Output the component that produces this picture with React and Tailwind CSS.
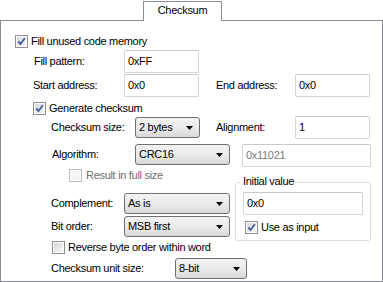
import React from "react";

function Check({ checked, disabled }) {
  return (
    <div
      className={
        disabled
          ? "w-[13px] h-[13px] shrink-0 border border-[#bcbcbc] bg-white p-[1px]"
          : "w-[13px] h-[13px] shrink-0 border border-[#8f8f8f] bg-white p-[1px]"
      }
    >
      <div
        className={
          disabled
            ? "w-full h-full bg-[#f4f4f4]"
            : "w-full h-full bg-linear-to-br from-[#d3d6dc] to-[#f8f8f8]"
        }
      >
        {checked && (
          <svg width="9" height="9" viewBox="0 0 9 9" className="block">
            <path d="M1.3 4.4 L3.5 7 L7.8 1.2" fill="none" stroke="#41609f" strokeWidth="1.9" />
          </svg>
        )}
      </div>
    </div>
  );
}

function Select({ w, text }) {
  return (
    <div
      className={`${w} h-[21px] shrink-0 rounded-[3px] border border-[#707070] bg-linear-to-b from-[#f3f3f3] via-[#ebebeb] to-[#d9d9d9] flex items-center justify-between pl-[3px] pr-[6px]`}
    >
      <span>{text}</span>
      <svg width="7" height="4" viewBox="0 0 7 4" className="block">
        <path d="M0 0H7L3.5 4Z" fill="#000" />
      </svg>
    </div>
  );
}

function Input({ w, text, disabled }) {
  return (
    <div
      className={`${w} h-[23px] shrink-0 rounded-[2px] border border-[#d6d6d6] border-t-[#c8c8c8] bg-white flex items-center pl-[3px] ${
        disabled ? "text-[#7a7a7a]" : "text-black"
      }`}
    >
      {text}
    </div>
  );
}

export default function App() {
  return (
    <div className="w-[383px] h-[282px] bg-white text-[11px] leading-[13px] tracking-[-0.3px] text-black font-['Liberation_Sans',Arial,sans-serif] overflow-hidden">
      <div className="h-[20px] flex">
        <div className="ml-[143px] mt-[1px] w-[79px] h-[20px] border border-b-0 border-[#898c95] bg-white relative z-10 flex items-center justify-center pb-[2px]">
          Checksum
        </div>
      </div>
      <div className="w-[383px] h-[262px] border border-[#898c95] flex flex-col">
        <div className="mt-[14px] pl-[14px] h-[13px] flex items-center">
          <Check checked />
          <span className="ml-[3px]">Fill unused code memory</span>
        </div>
        <div className="mt-[2px] pl-[32px] h-[23px] flex items-center">
          <span className="w-[91px] pl-[1px]">Fill pattern:</span>
          <Input w="w-[75px]" text="0xFF" />
        </div>
        <div className="mt-[1px] pl-[32px] h-[23px] flex items-center">
          <span className="w-[91px]">Start address:</span>
          <Input w="w-[75px]" text="0x0" />
          <span className="ml-[17px] w-[79px]">End address:</span>
          <Input w="w-[75px]" text="0x0" />
        </div>
        <div className="mt-[5px] pl-[32px] h-[13px] flex items-center">
          <Check checked />
          <span className="ml-[3px]">Generate checksum</span>
        </div>
        <div className="mt-[1px] pl-[50px] h-[23px] flex items-center">
          <span className="w-[84px]">Checksum size:</span>
          <Select w="w-[65px]" text="2 bytes" />
          <span className="ml-[16px] w-[79px]">Alignment:</span>
          <Input w="w-[75px]" text="1" />
        </div>
        <div className="mt-[5px] pl-[50px] h-[23px] flex items-start">
          <span className="w-[84px] h-[21px] flex items-center pl-[1px]">Algorithm:</span>
          <Select w="w-[95px]" text="CRC16" />
          <div className="ml-[12px]">
            <Input w="w-[129px]" text="0x11021" disabled />
          </div>
        </div>
        <div className="mt-[2px] pl-[68px] h-[13px] flex items-center">
          <Check disabled />
          <span className="ml-[4px] text-[#6d6d6d]">Result in full size</span>
        </div>
        <div className="flex">
          <div className="pl-[50px] flex flex-col">
            <div className="mt-[11px] h-[21px] flex items-center">
              <span className="w-[73px]">Complement:</span>
              <Select w="w-[106px]" text="As is" />
            </div>
            <div className="mt-[2px] h-[21px] flex items-center">
              <span className="w-[73px]">Bit order:</span>
              <Select w="w-[106px]" text="MSB first" />
            </div>
          </div>
          <div className="ml-[5px] w-[136px] h-[59px] border border-[#d5dfe5] rounded-[3px] relative flex flex-col">
            <span className="absolute left-[4px] -top-[8px] bg-white px-[3px]">Initial value</span>
            <div className="mt-[9px] ml-[7px]">
              <Input w="w-[120px]" text="0x0" />
            </div>
            <div className="mt-[6px] ml-[9px] h-[13px] flex items-center">
              <Check checked />
              <span className="ml-[3px]">Use as input</span>
            </div>
          </div>
        </div>
        <div className="pl-[51px] h-[13px] flex items-center">
          <Check />
          <span className="ml-[3px]">Reverse byte order within word</span>
        </div>
        <div className="mt-[4px] pl-[50px] h-[21px] flex items-center">
          <span className="w-[124px]">Checksum unit size:</span>
          <Select w="w-[72px]" text="8-bit" />
        </div>
      </div>
    </div>
  );
}
